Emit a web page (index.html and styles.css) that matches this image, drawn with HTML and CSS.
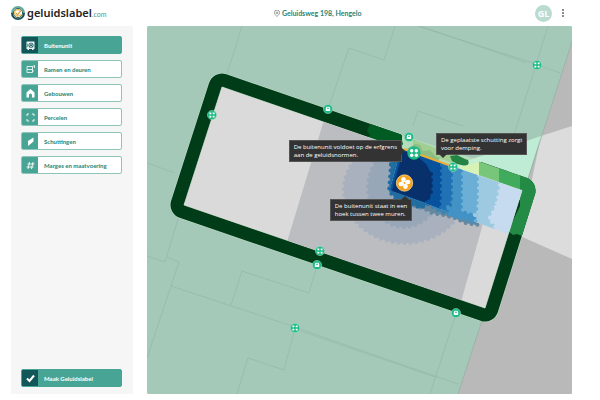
FILE: index.html
```html
<!DOCTYPE html>
<html lang="nl">
<head>
<meta charset="utf-8">
<meta name="viewport" content="width=device-width, initial-scale=1">
<title>geluidslabel.com</title>
<link rel="stylesheet" href="styles.css">
</head>
<body>
<header class="topbar">
  <a class="logo" href="#">
    <svg class="logo-mark" viewBox="0 0 30 30" aria-hidden="true">
      <path d="M2 15a13 13 0 0 1 26 0" fill="none" stroke="#64aa9c" stroke-width="4"/>
      <path d="M2 15a13 13 0 0 0 26 0" fill="none" stroke="#174d50" stroke-width="4"/>
      <circle cx="15" cy="15" r="10" fill="#fff" stroke="#174d50" stroke-width="2"/>
      <path d="M20 10a7 7 0 1 0 1 8" fill="none" stroke="#efb647" stroke-width="2.500"/>
      <path d="m11 15 3 4 7-9" fill="none" stroke="#d69b35" stroke-width="2.500"/>
    </svg>
    <span class="logo-name">geluidslabel</span><span class="logo-tld">.com</span>
  </a>
  <div class="address">
    <svg class="address-pin" viewBox="0 0 14 16" aria-hidden="true"><path d="M7 15C4 12 1 9 1 6a6 6 0 0 1 12 0c0 3-3 6-6 9Z" fill="none" stroke="#666" stroke-width="1.500"/><circle cx="7" cy="6.500" r="2" fill="none" stroke="#666" stroke-width="1.500"/></svg>
    <span>Geluidsweg 198, Hengelo</span>
  </div>
  <div class="account">
    <button class="avatar" type="button">GL</button>
    <button class="more" type="button" aria-label="Menu"><svg viewBox="0 0 4 10" aria-hidden="true"><g fill="#555"><circle cx="2" cy="2" r=".9"/><circle cx="2" cy="5" r=".9"/><circle cx="2" cy="8" r=".9"/></g></svg></button>
  </div>
</header>
<main class="workspace">
  <nav class="sidebar">
    <button class="tool tool-active" type="button"><span class="tool-icon"><svg viewBox="0 0 18 18" aria-hidden="true"><rect x="1" y="1" width="16" height="15" rx="1" fill="#e8f4f1"/><circle cx="10" cy="8.500" r="5" fill="#12565a"/><circle cx="10" cy="8.500" r="2.800" fill="none" stroke="#e8f4f1" stroke-width="1.500"/><path d="M3 5v7" stroke="#12565a"/><path d="M3 17h3m6 0h3" stroke="#e8f4f1" stroke-width="2"/></svg></span><span class="tool-label">Buitenunit</span></button>
    <button class="tool" type="button"><span class="tool-icon"><svg viewBox="0 0 18 18" aria-hidden="true"><g fill="none" stroke="#fff" stroke-width="1.600"><path d="M13 3H2v12h11v-3M2 9h11M13 3v9M13 3l4-2v5M13 12h3"/></g></svg></span><span class="tool-label">Ramen en deuren</span></button>
    <button class="tool" type="button"><span class="tool-icon"><svg viewBox="0 0 18 18" aria-hidden="true"><path d="m9 0 8 7v10h-5v-5a3 3 0 0 0-6 0v5H1V7Z" fill="#fff"/></svg></span><span class="tool-label">Gebouwen</span></button>
    <button class="tool" type="button"><span class="tool-icon"><svg viewBox="0 0 18 18" aria-hidden="true"><path d="M2 6V2h4m6 0h4v4m0 6v4h-4m-6 0H2v-4" fill="none" stroke="#fff" stroke-width="1.800"/></svg></span><span class="tool-label">Percelen</span></button>
    <button class="tool" type="button"><span class="tool-icon"><svg viewBox="0 0 18 18" aria-hidden="true"><path d="M4 8 15 1v8L4 18Z" fill="#fff"/></svg></span><span class="tool-label">Schuttingen</span></button>
    <button class="tool" type="button"><span class="tool-icon"><svg viewBox="0 0 18 18" aria-hidden="true"><path d="M7 2 4 16M14 2l-3 14M3 6h14M1 12h14" fill="none" stroke="#fff" stroke-width="1.800"/></svg></span><span class="tool-label">Marges en maatvoering</span></button>
    <button class="tool tool-active tool-submit" type="button"><span class="tool-icon"><svg viewBox="0 0 18 18" aria-hidden="true"><path d="m2 9 5 5 9-11" fill="none" stroke="#fff" stroke-width="4"/></svg></span><span class="tool-label">Maak Geluidslabel</span></button>
  </nav>
  <section class="map" aria-label="Geluidskaart">
    <svg class="map-drawing" viewBox="147 26 425 368" preserveAspectRatio="xMidYMid slice" aria-hidden="true">
      <defs>
        <clipPath id="plot"><path d="M222 87 522 190.500 485 308 184 205Z"/></clipPath>
        <clipPath id="open"><path d="M401 149 523 190 508 234 390 190Z"/></clipPath>
        <clipPath id="level-1"><path d="M372 120H398L403 143 402 153H370L368 147 371 143 366 139 370 135 367 131Z"/></clipPath>
        <clipPath id="level-2"><path d="M402 120H480V185H402Z"/></clipPath>
        <clipPath id="level-3"><path d="M479 150h21v40h-21Z"/></clipPath>
        <clipPath id="level-4"><path d="M499 150h22v50h-22Z"/></clipPath>
        <clipPath id="level-5"><path d="M520 150H550V238H530L526 234 522 236 517 234 513 235 508 231 520 206Z"/></clipPath>
        <path id="ring" d="M222 87 522 190.500 485 308 184 205Z" fill="none" stroke-linejoin="round" stroke-width="27"/>
        <g id="pin"><circle r="4.600" fill="#1dba85"/><circle r="4.600" fill="none" stroke="#a5dec7" stroke-width=".5"/><path d="M-2.600-2.600h1.900v1.900h-1.900zM.7-2.600h1.900v1.900h-1.900zM-2.600.7h1.900v1.900h-1.900zM.7.7h1.900v1.900h-1.900z" fill="#fff"/></g>
        <g id="house"><circle r="4.600" fill="#1dba85" stroke="#a5dec7" stroke-width=".5"/><path d="M-2.200-.4-1.500-2.300h3l.7 1.900v2.500h-4.400Z" fill="#fff"/><path d="M-1-1.300h2v1h-2z" fill="#1dba85"/></g>
      </defs>
      <rect x="147" y="26" width="425" height="368" fill="#a5c9b8"/>
      <path d="M577 26 529 176 458 394H572V26Z" fill="#b9b9b9"/>
      <path d="M541 136 572 126V259L520 236Z" fill="#dcdcdc"/>
      <path d="M455 165 541 136 524 190Z" fill="#bfecd5"/>
      <path d="M577 26 529 176 458 394" fill="none" stroke="#91ab9f" stroke-width=".6"/>
      <g class="parcel-lines">
        <path d="M242 26 227 74M328 109 349 48 384 60 395 26M417 26 527 61 560 73M420 26 527 63M548 26 514 135M409 137 418 111 478 131M147 163 175 173"/>
        <path d="M147 256 165 262 178 219M167 257 179 262 147 358M171 286 292 326 360 350 435 376 458 384M292 328 435 377M231 305 242 271 309 293 317 265M237 394 248 358 284 370 295 328M455 317 430 394"/>
      </g>
      <path d="M222 87 522 190.500 485 308 184 205Z" fill="none" stroke="#c2dfc9" stroke-width="28" stroke-linejoin="round"/>
      <use href="#ring" stroke="#003c18"/>
      <use href="#ring" stroke="#005c22" clip-path="url(#level-1)"/>
      <g clip-path="url(#level-2)"><path d="M222 87 522 190.500 485 308 184 205Z" fill="none" stroke="#b4dcbd" stroke-width="30"/></g>
      <path d="M402 130h7v14l-5 6h-4l3-7Z" fill="#b4dcbd"/>
      <path d="M401 126h80v35L401 135Z" fill="#a5c9b8"/>
      <path d="M401 137 403 144 400 149 397 144V134Z" fill="#005c22"/>
      <path d="M455 165 481 156V179L467 174Z" fill="#c5eed2"/>
      <path d="m412 139 40 15 9 6-6 4-41-15Z" fill="#a2cf91"/>
      <path d="m407 149 8-5 5 1 3 6 7-1 6 7 4 1-3 4Z" fill="#8dbd83"/>
      <path d="m450 156 7-1 8 4 3 1q2 4-2 6l-9-2-5-3Z" fill="#238443"/>
      <path d="M459 167 480 162V177L466 174Z" fill="#d6f2b5"/>
      <use href="#ring" stroke="#78c679" clip-path="url(#level-3)"/>
      <use href="#ring" stroke="#41ab5d" clip-path="url(#level-4)"/>
      <use href="#ring" stroke="#238b45" clip-path="url(#level-5)"/>
      <path d="M222 87 522 190.500 485 308 184 205Z" fill="#dadada" stroke="#e4eee0" stroke-width=".7"/>
      <g clip-path="url(#plot)">
        <path d="M324 120 287 242 461 302 484 220 508 150Z" fill="#bbbdc1"/>
        <ellipse cx="405" cy="190" rx="61" ry="53" fill="#a8b1bd" stroke="#a8b1bd" class="scallop"/>
        <ellipse cx="404" cy="187" rx="36" ry="40" fill="#98a7b8" stroke="#98a7b8" class="scallop"/>
        <path d="M390 187 484 219 477 225 465 223 455 218 443 215 432 213 425 209 415 206 405 205Z" fill="#65879f" stroke="#65879f" class="scallop"/>
        <path d="M391 164 400 151 419 162 432 202 421 208 396 199 389 191Z" fill="#226da0" stroke="#226da0" class="scallop"/>
        <path d="M431 198 465 210 457 216 442 212 431 206Z" fill="#3986b5" stroke="#3986b5" class="scallop"/>
        <g clip-path="url(#open)">
          <path d="M390 140H535V240H390Z" fill="#c6dbef"/>
          <path d="M390 140H498V188L495 203 493 230H390Z" fill="#9ecae1" stroke="#9ecae1" class="scallop"/>
          <path d="M390 140H477V197L475 230H390Z" fill="#6baed6" stroke="#6baed6" class="scallop"/>
          <path d="M390 140H461V204L460 230H390Z" fill="#4292c6" stroke="#4292c6" class="scallop"/>
          <path d="M390 140H451V195L448 230H390Z" fill="#2171b5" stroke="#2171b5" class="scallop"/>
          <path d="M390 140H440V195L438 230H390Z" fill="#08519c" stroke="#08519c" class="scallop"/>
        </g>
        <path d="M403 151 417 156 426 164 431 173 432 185 430 199 424 202 392 191Z" fill="#08306b"/>
        <path d="M431 174V198" fill="none" stroke="#08306b" class="scallop"/>
        <path d="M448 207 475 216 473 222 466 219 457 218 449 214Z" fill="#4292c6" stroke="#4292c6" class="scallop"/>
        <path d="M475 215 494 221 492 224 484 220Z" fill="#9ecae1" stroke="#9ecae1" class="scallop"/>
        <path d="M500 200 519 200 508 232 496 226 489 219Z" fill="#c6dbef" stroke="#c6dbef" class="scallop"/>
      </g>
      <path d="M404 149 454 167" stroke="#edae36" stroke-width="2"/>
      <use href="#pin" x="212" y="115"/><use href="#pin" x="320" y="251"/><use href="#pin" x="295" y="328"/><use href="#pin" x="537" y="65"/><use href="#pin" x="453" y="167"/>
      <use href="#house" x="328" y="109"/><use href="#house" x="409" y="137"/><use href="#house" x="317" y="265"/><use href="#house" x="456" y="313"/>
      <g transform="translate(414 153)"><circle r="6.700" fill="#1dba85"/><g fill="#fff"><circle cx="-2.300" cy="-2.300" r="1.700"/><circle cx="2.300" cy="-2.300" r="1.700"/><circle cx="-2.300" cy="2.300" r="1.700"/><circle cx="2.300" cy="2.300" r="1.700"/></g></g>
      <g transform="translate(404.500 183)"><circle r="8.200" fill="#f5a21d" stroke="#ffe0a0" stroke-width=".7"/><g fill="#fff"><ellipse cx="-1" cy="-3.300" rx="2.300" ry="2.600"/><ellipse cx="3.300" cy="-1" rx="2.600" ry="2.300"/><ellipse cx="1" cy="3.300" rx="2.300" ry="2.600"/><ellipse cx="-3.300" cy="1" rx="2.600" ry="2.300"/><circle r="2"/></g><circle r=".9" fill="#f5a21d"/></g>
    </svg>
    <p class="note note-border">De buitenunit voldoet op de erfgrens<br>aan de geluidsnormen.</p>
    <p class="note note-fence">De geplaatste schutting zorgt<br>voor demping.</p>
    <p class="note note-unit">De buitenunit staat in een<br>hoek tussen twee muren.</p>
  </section>
</main>
</body>
</html>
```
FILE: styles.css
```css
* { box-sizing: border-box; }

body {
  display: flex;
  flex-direction: column;
  min-height: 100vh;
  margin: 0;
  background: #fff;
  color: #268575;
  font-family: Lato, sans-serif;
  font-size: 6px;
}

button {
  padding: 0;
  border: 0;
  font: inherit;
  cursor: pointer;
}

svg { display: block; }

.topbar {
  display: grid;
  grid-template-columns: 9fr auto 7fr;
  align-items: center;
  height: 26px;
  padding: 0 34px 0 11px;
}

.logo {
  display: flex;
  align-items: baseline;
  color: #222;
  line-height: 16px;
  text-decoration: none;
}

.logo-mark {
  align-self: center;
  width: 14px;
  height: 14px;
  margin-right: 2px;
}

.logo-name {
  font-family: "Noto Sans", sans-serif;
  font-size: 11px;
  font-weight: 600;
}

.logo-tld {
  color: #4b9a8d;
  font-size: 7px;
}

.address {
  display: flex;
  align-items: center;
  gap: 2px;
  font-size: 7px;
  font-weight: 700;
}

.address-pin {
  width: 6px;
  height: 7px;
}

.account {
  display: flex;
  align-items: center;
  justify-content: flex-end;
  gap: 9px;
}

.avatar {
  width: 17px;
  height: 17px;
  border-radius: 50%;
  background: #b9dbd0;
  color: #fff;
  font-family: "Open Sans", sans-serif;
  font-size: 9px;
  font-weight: 700;
  line-height: 17px;
}

.more {
  width: 5px;
  background: none;
}

.more svg { width: 4px; height: 10px; }

.workspace {
  display: grid;
  flex: 1;
  grid-template-columns: 122px 1fr;
  gap: 14px;
  padding: 0 28px 6px 11px;
}

.sidebar {
  display: flex;
  flex-direction: column;
  gap: 6px;
  padding: 10px 11px 7px 10px;
  background: #f6f6f6;
}

.tool {
  display: flex;
  height: 18px;
  overflow: hidden;
  border: 1px solid #8dc5b9;
  border-radius: 2px;
  background: #fff;
  color: #268575;
  font-weight: 700;
  text-align: left;
}

.tool-icon {
  display: grid;
  flex: none;
  place-items: center;
  align-self: stretch;
  width: 16px;
  background: #48a596;
}

.tool-icon svg { width: 9px; height: 9px; }

.tool-label {
  align-self: center;
  padding-left: 6px;
}

.tool-active {
  border-color: #48a596;
  background: #48a596;
  color: #fff;
}

.tool-active .tool-icon { background: #12565a; }

.tool-submit { margin-top: auto; }

.map {
  position: relative;
  overflow: hidden;
  border-radius: 2px;
  background: #a5c9b8;
}

.map-drawing {
  width: 100%;
  height: 100%;
}

.parcel-lines {
  fill: none;
  stroke: #91b5a5;
  stroke-width: 0.6;
}

.scallop {
  stroke-width: 4;
  stroke-linecap: round;
  stroke-dasharray: 0 6;
}

.note {
  position: absolute;
  margin: 0;
  padding: 2px 4px;
  border: 1px solid #555;
  background: #333;
  color: #fff;
  font-family: "Open Sans", sans-serif;
  line-height: 8px;
  white-space: nowrap;
}

.note::after {
  position: absolute;
  border: 4px solid transparent;
  content: "";
}

.note-border {
  right: 40%;
  top: 31%;
}

.note-border::after {
  left: 100%;
  top: 6px;
  border-left-color: #333;
}

.note-fence {
  left: 68%;
  top: 29%;
}

.note-fence::after {
  left: 2px;
  top: 100%;
  border-top-color: #333;
}

.note-unit {
  left: 43%;
  top: 47%;
}

.note-unit::after {
  right: 2px;
  bottom: 100%;
  border-bottom-color: #333;
}
```
